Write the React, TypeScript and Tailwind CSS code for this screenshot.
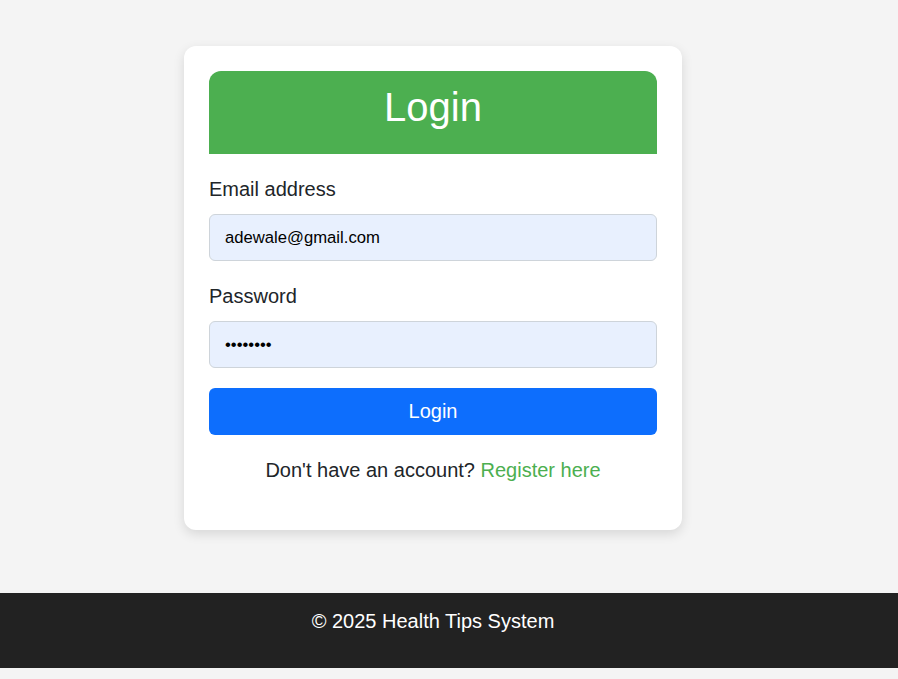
export default function App() {
  const font = { fontFamily: '"Liberation Sans", Arial, sans-serif' }

  return (
    <div className="min-h-[679px] bg-[#f4f4f4] text-[#212529]" style={font}>
      <main className="w-[866px] pt-[46px] pb-[63px]">
        <div className="mx-auto w-[498px] rounded-[12px] bg-white px-[25px] pt-[25px] pb-[20px] shadow-[0_4px_12px_rgba(0,0,0,0.12)]">
          <div className="rounded-t-[12px] bg-[#4caf50] pt-[12px] pb-[23px] text-center">
            <h2 className="text-[40px] leading-[48px] text-white">Login</h2>
          </div>

          <form className="mt-[20px]">
            <label className="block text-[20px] leading-[30px] mb-[10px]">Email address</label>
            <input
              type="email"
              defaultValue="adewale@gmail.com"
              className="block h-[47px] w-full rounded-[6px] border border-[#ced4da] bg-[#e8f0fe] px-[15px] text-[16.67px] text-black outline-none"
            />

            <label className="mt-[20px] block text-[20px] leading-[30px] mb-[10px]">Password</label>
            <input
              type="password"
              defaultValue="password"
              className="block h-[47px] w-full rounded-[6px] border border-[#ced4da] bg-[#e8f0fe] px-[15px] text-[16.67px] text-black outline-none"
            />

            <button
              type="button"
              className="mt-[20px] block h-[47px] w-full rounded-[6px] bg-[#0d6efd] pb-[2px] text-[20px] text-white"
            >
              Login
            </button>
          </form>

          <p className="mt-[20px] mb-[25px] text-center text-[20px] leading-[30px]">
            Don't have an account? <a className="text-[#4caf50]">Register here</a>
          </p>
        </div>
      </main>

      <footer className="h-[75px] bg-[#222222] pr-[32px] pt-[10px] text-center text-[20px] leading-[23px] text-white">
        <p className="pt-[7px]">© 2025 Health Tips System</p>
      </footer>
    </div>
  )
}
